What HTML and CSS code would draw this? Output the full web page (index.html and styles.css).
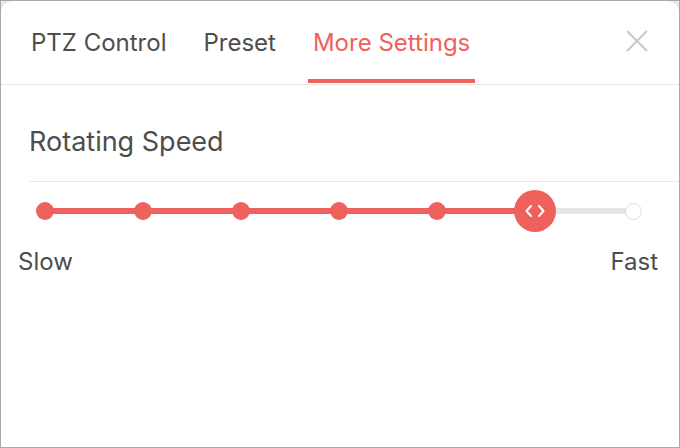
FILE: index.html
```html
<!DOCTYPE html>
<html>
<head>
<meta charset="utf-8">
<link rel="stylesheet" href="styles.css">
</head>
<body>
<div class="frame">
  <div class="panel">
    <div class="tabs">
      <div class="tab">PTZ Control</div>
      <div class="tab">Preset</div>
      <div class="tab active">More Settings</div>
      <div class="spacer"></div>
      <div class="close">
        <svg width="24" height="24" viewBox="0 0 24 24"><path d="M2 2 L22 22 M22 2 L2 22" stroke="#c9c9c9" stroke-width="2" fill="none"/></svg>
      </div>
    </div>
    <div class="section">
      <div class="title">Rotating Speed</div>
      <div class="slider-area">
        <div class="slider">
          <div class="stop"><span class="dot"></span></div>
          <div class="stop"><span class="dot"></span></div>
          <div class="stop"><span class="dot"></span></div>
          <div class="stop"><span class="dot"></span></div>
          <div class="stop"><span class="dot"></span></div>
          <div class="stop"><span class="thumb">
            <svg width="22" height="16" viewBox="0 0 22 16"><path d="M7 3 L2.5 8 L7 13 M15 3 L19.5 8 L15 13" stroke="#fff" stroke-width="2" fill="none" stroke-linecap="round" stroke-linejoin="round"/></svg>
          </span></div>
          <div class="stop"><span class="dot empty"></span></div>
        </div>
        <div class="labels">
          <span>Slow</span>
          <span>Fast</span>
        </div>
      </div>
    </div>
  </div>
</div>
</body>
</html>
```
FILE: styles.css
```css
* { box-sizing: border-box; }
html, body { margin: 0; padding: 0; }
body {
  width: 680px;
  height: 448px;
  font-family: Inter, "Liberation Sans", sans-serif;
  color: #4d4d4d;
}
.frame {
  width: 680px;
  height: 448px;
  border: 1px solid #a9a9a9;
  background: #e9e9e9;
}
.panel {
  height: 100%;
  background: #fff;
  border-radius: 12px 12px 0 0;
}
.tabs {
  height: 84px;
  display: flex;
  align-items: stretch;
  border-bottom: 1px solid #e6e6e6;
  padding-left: 25px;
  padding-right: 30px;
}
.tab {
  font-size: 24px;
  padding: 4px 5px 0;
  margin-right: 27px;
  margin-bottom: 1px;
  display: flex;
  align-items: center;
  border-bottom: 4px solid transparent;
}
.tab.active {
  color: #ee615c;
  border-bottom-color: #ee615c;
}
.spacer { flex: 1; }
.close {
  display: flex;
  align-items: center;
  padding-bottom: 4px;
}
.section {
  padding-left: 28px;
}
.title {
  font-size: 27px;
  height: 97px;
  display: flex;
  align-items: center;
  padding-top: 16px;
  border-bottom: 1px solid #e9e9e9;
}
.slider-area {
  padding-top: 7px;
  margin-left: -28px;
}
.slider {
  margin: 0 46px 0 44px;
  height: 44px;
  display: flex;
  justify-content: space-between;
  align-items: center;
  background: linear-gradient(to right, #ee615c 0 83.5%, #e6e6e6 83.5% 100%) center / 100% 6px no-repeat;
}
.stop {
  width: 0;
  display: flex;
  justify-content: center;
  align-items: center;
}
.dot {
  flex: none;
  width: 18px;
  height: 18px;
  border-radius: 50%;
  background: #ee615c;
}
.dot.empty {
  width: 17px;
  height: 17px;
  background: #fff;
  border: 1px solid #dcdcdc;
}
.thumb {
  flex: none;
  width: 42px;
  height: 42px;
  border-radius: 50%;
  background: #ee615c;
  display: flex;
  align-items: center;
  justify-content: center;
}
.thumb svg { display: block; }
.labels {
  display: flex;
  justify-content: space-between;
  font-size: 24px;
  padding: 14px 21px 0 17px;
}
```
